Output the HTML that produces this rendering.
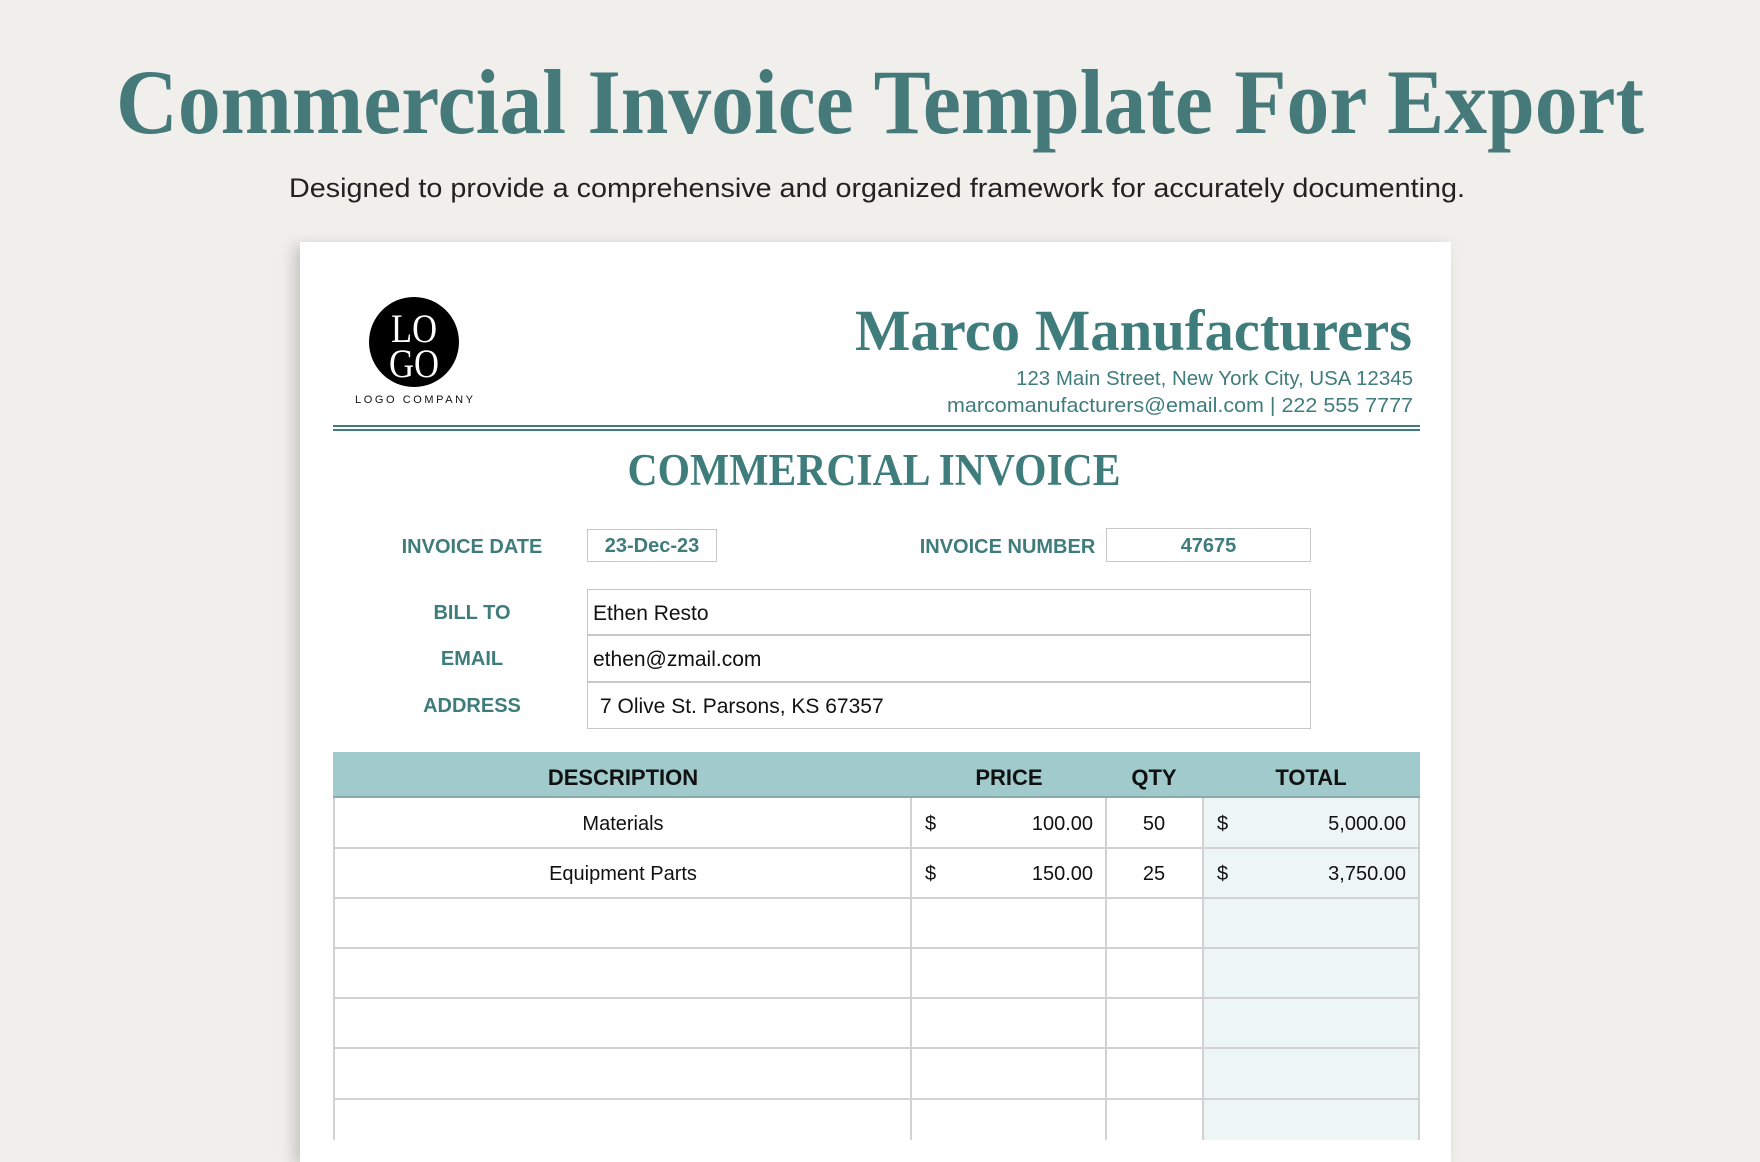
<!DOCTYPE html>
<html><head><meta charset="utf-8"><style>
*{margin:0;padding:0;box-sizing:border-box}
body{width:1760px;height:1140px;background:#f0efeb;position:relative;overflow:hidden;font-family:"Liberation Sans",sans-serif}
.abs{position:absolute}
.paper{left:300px;top:242px;width:1151px;height:920px;background:#fff;box-shadow:-6px 4px 14px rgba(0,0,0,.18)}
.lbl{color:#3f7c7c;font-weight:bold;font-size:20px;text-align:center;white-space:nowrap}
.box{border:1.5px solid #c8c8c8;background:#fff}
.t{color:#111;font-size:21px}
</style></head><body>
<svg class="abs" style="left:0;top:0" width="1760" height="220">
<text x="880" y="133" text-anchor="middle" font-family="Liberation Serif,serif" font-weight="bold" font-size="92" fill="#467a7a" textLength="1528" lengthAdjust="spacingAndGlyphs">Commercial Invoice Template For Export</text>
<text x="877" y="197" text-anchor="middle" font-family="Liberation Sans,sans-serif" font-size="27" fill="#222" textLength="1176" lengthAdjust="spacingAndGlyphs">Designed to provide a comprehensive and organized framework for accurately documenting.</text>
</svg>
<div class="abs paper"></div>
<svg class="abs" style="left:0;top:0" width="1760" height="1140">
<circle cx="414" cy="342" r="45" fill="#000"/>
<text x="414" y="342" text-anchor="middle" font-family="Liberation Serif,serif" font-size="40" fill="#fff" textLength="46" lengthAdjust="spacingAndGlyphs">LO</text>
<text x="414" y="377" text-anchor="middle" font-family="Liberation Serif,serif" font-size="40" fill="#fff" textLength="50" lengthAdjust="spacingAndGlyphs">GO</text>
<text x="414" y="403" text-anchor="middle" font-family="Liberation Sans,sans-serif" font-size="11" fill="#111" textLength="118" lengthAdjust="spacing">LOGO COMPANY</text>
<text x="1412" y="350" text-anchor="end" font-family="Liberation Serif,serif" font-weight="bold" font-size="58" fill="#3f7c7c" textLength="557" lengthAdjust="spacingAndGlyphs">Marco Manufacturers</text>
<text x="1413" y="385" text-anchor="end" font-family="Liberation Sans,sans-serif" font-size="20" fill="#3f7c7c" textLength="397" lengthAdjust="spacingAndGlyphs">123 Main Street, New York City, USA 12345</text>
<text x="1413" y="412" text-anchor="end" font-family="Liberation Sans,sans-serif" font-size="20" fill="#3f7c7c" textLength="466" lengthAdjust="spacingAndGlyphs">marcomanufacturers@email.com | 222 555 7777</text>
<rect x="333" y="425" width="1087" height="2" fill="#3f7c7c"/>
<rect x="333" y="429" width="1087" height="2" fill="#3f7c7c"/>
<text x="874" y="485" text-anchor="middle" font-family="Liberation Serif,serif" font-weight="bold" font-size="45" fill="#3f7c7c" textLength="493" lengthAdjust="spacingAndGlyphs">COMMERCIAL INVOICE</text>
</svg>
<div class="abs lbl" style="left:372px;top:536px;width:200px">INVOICE DATE</div>
<div class="abs box lbl" style="left:587px;top:529px;width:130px;height:33px;line-height:33px">23-Dec-23</div>
<div class="abs lbl" style="left:917px;top:536px;width:181px">INVOICE NUMBER</div>
<div class="abs box lbl" style="left:1106px;top:528px;width:205px;height:34px;line-height:34px">47675</div>
<div class="abs lbl" style="left:372px;top:602px;width:200px">BILL TO</div>
<div class="abs lbl" style="left:372px;top:648px;width:200px">EMAIL</div>
<div class="abs lbl" style="left:372px;top:695px;width:200px">ADDRESS</div>
<div class="abs box" style="left:587px;top:589px;width:724px;height:140px"></div>
<div class="abs" style="left:588px;top:634px;width:722px;height:1.5px;background:#c8c8c8"></div>
<div class="abs" style="left:588px;top:681px;width:722px;height:1.5px;background:#c8c8c8"></div>
<div class="abs t" style="left:593px;top:602px">Ethen Resto</div>
<div class="abs t" style="left:593px;top:648px">ethen@zmail.com</div>
<div class="abs t" style="left:600px;top:695px">7 Olive St. Parsons, KS 67357</div>
<div class="abs" style="left:333px;top:752px;width:1087px;height:46px;background:#a0cacb;border-bottom:2px solid #8aa"></div>
<div class="abs" style="left:1203px;top:798px;width:217px;height:342px;background:#eef6f5"></div>
<svg class="abs" style="left:0;top:0" width="1760" height="1140">
<g font-family="Liberation Sans,sans-serif" font-weight="bold" font-size="22" fill="#111" text-anchor="middle">
<text x="623" y="785">DESCRIPTION</text><text x="1009" y="785">PRICE</text><text x="1154" y="785">QTY</text><text x="1311" y="785">TOTAL</text></g>
<g stroke="#d2d2d2" stroke-width="2">
<line x1="334" y1="798" x2="334" y2="1140"/><line x1="1419" y1="798" x2="1419" y2="1140"/>
<line x1="911" y1="798" x2="911" y2="1140"/><line x1="1106" y1="798" x2="1106" y2="1140"/><line x1="1203" y1="798" x2="1203" y2="1140"/>
<line x1="334" y1="848" x2="1420" y2="848"/><line x1="334" y1="898" x2="1420" y2="898"/><line x1="334" y1="948" x2="1420" y2="948"/>
<line x1="334" y1="998" x2="1420" y2="998"/><line x1="334" y1="1048" x2="1420" y2="1048"/><line x1="334" y1="1099" x2="1420" y2="1099"/></g>
<g font-family="Liberation Sans,sans-serif" font-size="20" fill="#111">
<text x="623" y="830" text-anchor="middle">Materials</text>
<text x="623" y="880" text-anchor="middle">Equipment Parts</text>
<text x="925" y="830">$</text><text x="925" y="880">$</text>
<text x="1093" y="830" text-anchor="end">100.00</text><text x="1093" y="880" text-anchor="end">150.00</text>
<text x="1154" y="830" text-anchor="middle">50</text><text x="1154" y="880" text-anchor="middle">25</text>
<text x="1217" y="830">$</text><text x="1217" y="880">$</text>
<text x="1406" y="830" text-anchor="end">5,000.00</text><text x="1406" y="880" text-anchor="end">3,750.00</text>
</g>
</svg>
</body></html>
